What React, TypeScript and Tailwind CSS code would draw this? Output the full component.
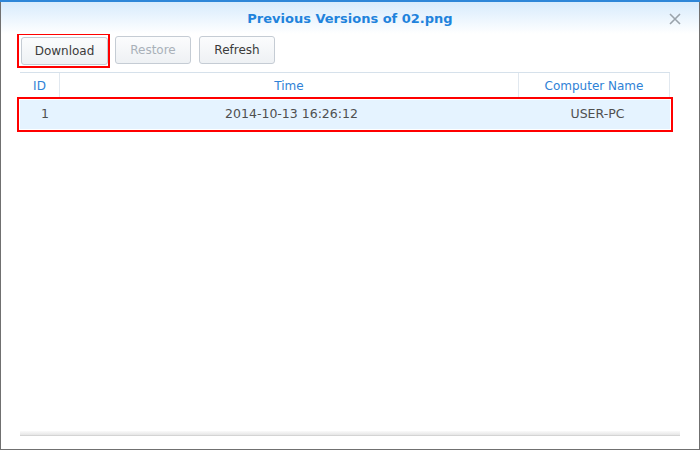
import React from 'react';

const font = { fontFamily: '"DejaVu Sans", Verdana, sans-serif' };

const Button: React.FC<{ label: string; disabled?: boolean; highlight?: boolean }> = ({ label, disabled, highlight }) => (
    <div className={highlight ? 'border-2 border-[#ff0000] pt-[2px] pb-[1px] pl-[2px] pr-[0px] -ml-[3px] -mt-[3px] -mr-[3px]' : ''}>
        <button
            className={`h-[28px] rounded-[3px] border border-[#c5ccd4] bg-gradient-to-b from-[#fbfcfd] to-[#eef1f4] text-[12px] ${
                disabled ? 'text-[#a9b1b9]' : 'text-[#3b3b3b]'
            } ${label === 'Download' ? 'w-[87px]' : 'w-[76px]'}`}
        >
            {label}
        </button>
    </div>
);

export default function App() {
    return (
        <div className="w-[700px] h-[450px] bg-white border-x border-b border-[#707070] flex flex-col" style={font}>
            <div className="h-[2px] bg-[#2d86d8] -mx-px" />
            <div className="h-[32px] bg-gradient-to-b from-[#d7ebfc] to-[#ffffff] relative flex items-center justify-center">
                <span className="text-[13px] font-bold text-[#1f83dc] mt-[1px]">Previous Versions of 02.png</span>
                <svg className="absolute right-[18px] top-[11px]" width="12" height="12" viewBox="0 0 12 12">
                    <path d="M1 1 L11 11 M11 1 L1 11" stroke="#9aa3ab" strokeWidth="1.6" />
                </svg>
            </div>
            <div className="flex items-start gap-[8px] pl-[19px] h-[38px] pt-[2px]">
                <Button label="Download" highlight />
                <Button label="Restore" disabled />
                <Button label="Refresh" />
            </div>
            <div className="mx-[19px] mr-[29px] border-t border-[#d6e1eb]">
                <div className="flex h-[26px] items-center text-[12px] text-[#2f82d6]">
                    <div className="w-[40px] text-center border-r border-[#e1e8ef] h-full flex items-center justify-center">ID</div>
                    <div className="flex-1 text-center border-r border-[#e1e8ef] h-full flex items-center justify-center">Time</div>
                    <div className="w-[151px] text-center h-full flex items-center justify-center border-r border-[#e1e8ef]">Computer Name</div>
                </div>
                <div className="outline-2 outline-[#ff0000] outline-offset-[1px] mt-[1px]">
                    <div className="flex h-[29px] items-center bg-[#e5f3ff] text-[12.5px] text-[#4f4f4f]">
                        <div className="w-[40px] text-right pr-[11px]">1</div>
                        <div className="flex-1 text-center pl-[4px]">2014-10-13 16:26:12</div>
                        <div className="w-[151px] text-center pl-[6px]">USER-PC</div>
                    </div>
                </div>
            </div>
            <div className="flex-1" />
            <div className="mx-[19px] h-[5px] bg-gradient-to-b from-[#fafafa] to-[#e6e6e6] border-b border-[#d4d4d4] mb-[13px]" />
        </div>
    );
}
